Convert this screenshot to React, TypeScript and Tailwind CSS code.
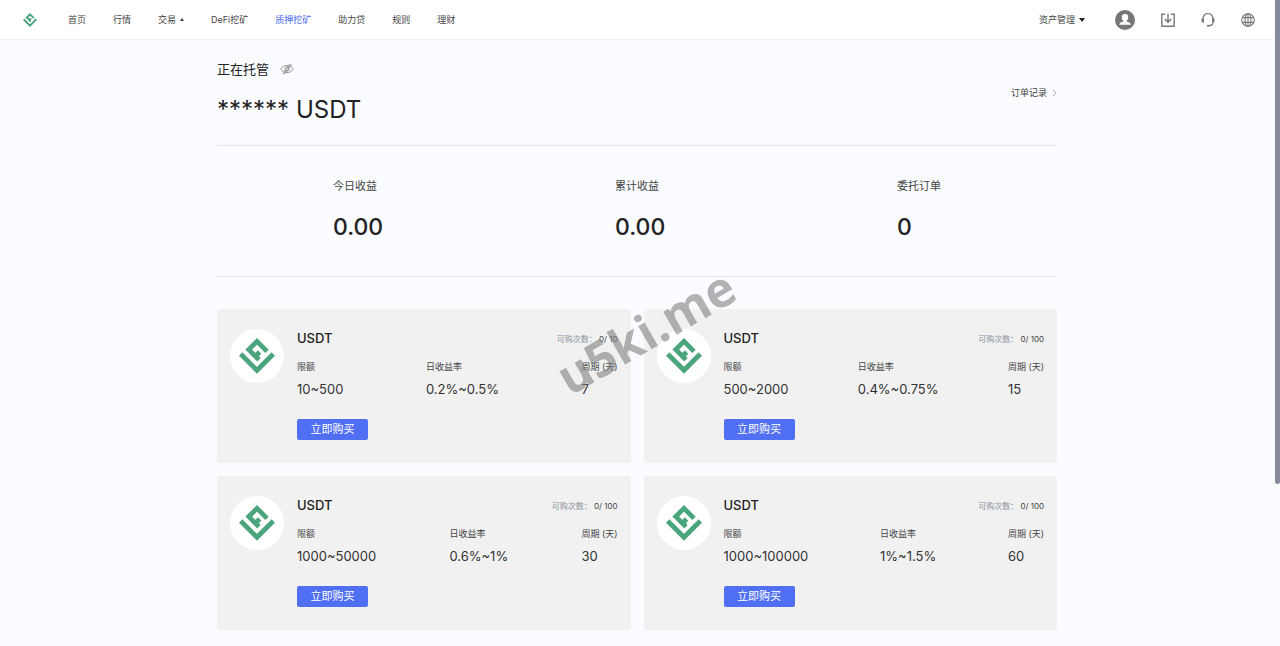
import React from 'react';

const navItems = [
  { label: '首页' },
  { label: '行情' },
  { label: '交易', menu: true },
  { label: 'DeFi挖矿' },
  { label: '质押挖矿', active: true },
  { label: '助力贷' },
  { label: '规则' },
  { label: '理财' },
];

const stats = [
  { label: '今日收益', value: '0.00' },
  { label: '累计收益', value: '0.00' },
  { label: '委托订单', value: '0' },
];

const products = [
  { id: 1, limit: '10~500', rate: '0.2%~0.5%', days: '7', times: '0/ 10' },
  { id: 2, limit: '500~2000', rate: '0.4%~0.75%', days: '15', times: '0/ 100' },
  { id: 3, limit: '1000~50000', rate: '0.6%~1%', days: '30', times: '0/ 100' },
  { id: 4, limit: '1000~100000', rate: '1%~1.5%', days: '60', times: '0/ 100' },
];

const Logo = ({ className }: { className: string }) => (
  <svg viewBox="0 0 36 36" className={className} fill="none" stroke="#4ba57c" strokeWidth="4.8">
    <path d="M1.7 16 18 32.3 34.3 16" />
    <path d="M28 13.4 18 3.4 9.8 11.6 20 21.8M16.400 18.200 20.600 14" />
  </svg>
);

const AvatarIcon = () => (
  <svg viewBox="0 0 20 20" className="size-5">
    <circle cx="10" cy="10" r="10" fill="#777" />
    <path
      d="M10 4a3.2 3.2 0 0 0-3.2 3.4c0 1.4.7 2.6 1.6 3.2v.8c-2 .5-4.2 1.3-4.2 3.4h11.6c0-2.1-2.2-2.9-4.2-3.4v-.8c.9-.6 1.6-1.8 1.6-3.2A3.2 3.2 0 0 0 10 4Z"
      fill="#fff"
    />
  </svg>
);

const DownloadIcon = () => (
  <svg viewBox="0 0 14 14" className="size-3.5" fill="none" stroke="#777" strokeWidth="1.4">
    <path d="M4 1.2H.8V13.2H13.2V1.2H10M7 .5V9M3.8 6 7 9.2 10.2 6" />
  </svg>
);

const HeadsetIcon = () => (
  <svg viewBox="0 0 14 14" className="size-3.5" fill="none" stroke="#777" strokeWidth="1.2">
    <path d="M2 6V5.5a5 5 0 0 1 10 0V6M12 9.5c0 2-1.5 3-4 3.2" />
    <path d="M1.8 5.2V9.5M12.2 5.2V9.5" strokeWidth="2.4" />
    <path d="M6 12.8H8.4" strokeWidth="1.8" />
  </svg>
);

const GlobeIcon = () => (
  <svg viewBox="0 0 14 14" className="size-3.5" fill="none" stroke="#777" strokeWidth="1.1">
    <circle cx="7" cy="7" r="6.3" />
    <ellipse cx="7" cy="7" rx="3" ry="6.3" />
    <path d="M7 .7V13.3M1.2 4.6H12.8M1.2 9.4H12.8" />
  </svg>
);

const HiddenEyeIcon = () => (
  <svg viewBox="0 0 14 12" className="h-3 w-3.5" fill="none" stroke="#8a8a8a" strokeWidth="0.9">
    <path d="M.7 6C3.5 1.2 10.5 1.2 13.3 6 10.5 10.8 3.5 10.8.7 6Z" />
    <circle cx="7" cy="6" r="2.2" />
    <path d="M2.8 11 10.2.8M4.2 11.5 11.6 1.3" />
  </svg>
);

const Header = () => (
  <header className="flex h-10 items-center justify-between border-b border-[#eeeff1] bg-white pr-[19px] pl-[23px] text-[9px] text-[#444]">
    <div className="flex items-center gap-[31px]">
      <a href="#" aria-label="首页">
        <Logo className="size-3.5" />
      </a>
      <nav className="flex items-center gap-[27px]">
        {navItems.map((item) => (
          <a
            key={item.label}
            href="#"
            className={item.active ? 'text-[#4a6cf0]' : 'flex items-center gap-1'}
          >
            {item.label}
            {item.menu && (
              <svg viewBox="0 0 4 3" className="h-[3px] w-1" fill="#444">
                <path d="M0 3 2 0 4 3Z" />
              </svg>
            )}
          </a>
        ))}
      </nav>
    </div>
    <div className="flex items-center gap-[26px]">
      <button type="button" className="flex items-center gap-1">
        资产管理
        <svg viewBox="0 0 6 4" className="h-1 w-1.5" fill="#222">
          <path d="M0 0H6L3 4Z" />
        </svg>
      </button>
      <button type="button" aria-label="账户" className="ml-1">
        <AvatarIcon />
      </button>
      <button type="button" aria-label="下载">
        <DownloadIcon />
      </button>
      <button type="button" aria-label="客服">
        <HeadsetIcon />
      </button>
      <button type="button" aria-label="语言">
        <GlobeIcon />
      </button>
    </div>
  </header>
);

const ProductCard = ({ product }: { product: (typeof products)[number] }) => {
  const fields = [
    { label: '限额', value: product.limit },
    { label: '日收益率', value: product.rate },
    { label: '周期 (天)', value: product.days },
  ];

  return (
    <article className="flex gap-[13px] rounded-[3px] bg-[#f1f1f1] px-[13px] pt-5 pb-[23px]">
      <div className="flex size-[54px] shrink-0 items-center justify-center rounded-full bg-white">
        <Logo className="size-9" />
      </div>
      <div className="flex-1">
        <div className="flex h-5 items-center justify-between">
          <h3 className="text-[13px] font-medium text-[#222]">USDT</h3>
          <p className="text-[8px] text-[#444]">
            <span className="text-[#8a929e]">可购次数：</span> {product.times}
          </p>
        </div>
        <dl className="mt-2.5 flex justify-between">
          {fields.map((field) => (
            <div key={field.label}>
              <dt className="text-[9px] leading-4 text-[#444]">{field.label}</dt>
              <dd className="mt-1 text-[13px] leading-5 text-[#333]">{field.value}</dd>
            </div>
          ))}
        </dl>
        <button
          type="button"
          className="mt-5 block h-[21px] w-[71px] rounded-[2px] bg-[#506ff2] text-[11px] text-white"
        >
          立即购买
        </button>
      </div>
    </article>
  );
};

const App = () => {
  return (
    <div className="relative flex min-h-screen bg-[#fafcff] font-['Inter','Noto_Sans_CJK_SC',sans-serif]">
      <div className="min-w-0 flex-1">
        <Header />
        <main className="mx-auto max-w-[840px] pb-4">
          {/* Balance */}
          <section className="flex items-center justify-between border-b border-[#e2e4e7] py-[19px]">
            <div>
              <h1 className="flex items-center gap-[11px] text-[13px] leading-5 text-[#222]">
                正在托管
                <button type="button" aria-label="显示余额">
                  <HiddenEyeIcon />
                </button>
              </h1>
              <p className="mt-[15px] text-[24px] leading-8 text-[#222]">****** USDT</p>
            </div>
            <a href="#" className="flex items-center gap-[5px] text-[9px] text-[#444]">
              订单记录
              <svg viewBox="0 0 5 8" className="h-2 w-[5px]" fill="none" stroke="#999" strokeWidth="0.8">
                <path d="M.8.8 4.2 4 .8 7.2" />
              </svg>
            </a>
          </section>

          {/* Earnings */}
          <section className="flex justify-around border-b border-[#e2e4e7] pt-[30px] pb-[33px]">
            {stats.map((stat) => (
              <div key={stat.label}>
                <p className="text-[11px] leading-5 text-[#444]">{stat.label}</p>
                <p className="mt-[15px] text-[23px] leading-8 font-medium text-[#222]">{stat.value}</p>
              </div>
            ))}
          </section>

          {/* Products */}
          <section className="mt-8 grid grid-cols-2 gap-[13px]">
            {products.map((product) => (
              <ProductCard key={product.id} product={product} />
            ))}
          </section>
        </main>
      </div>

      {/* Scroll track */}
      <div className="w-1.5 shrink-0 pl-px">
        <div className="h-[484px] rounded-b-sm bg-[#858b9b]" />
      </div>

      {/* Watermark */}
      <div className="pointer-events-none absolute inset-x-0 top-[301px] flex justify-center pl-2.5">
        <span className="-rotate-30 font-['Open_Sans',sans-serif] text-[49px] leading-[60px] font-bold text-[#808080]/60">
          u5ki.me
        </span>
      </div>
    </div>
  );
};

export default App;
